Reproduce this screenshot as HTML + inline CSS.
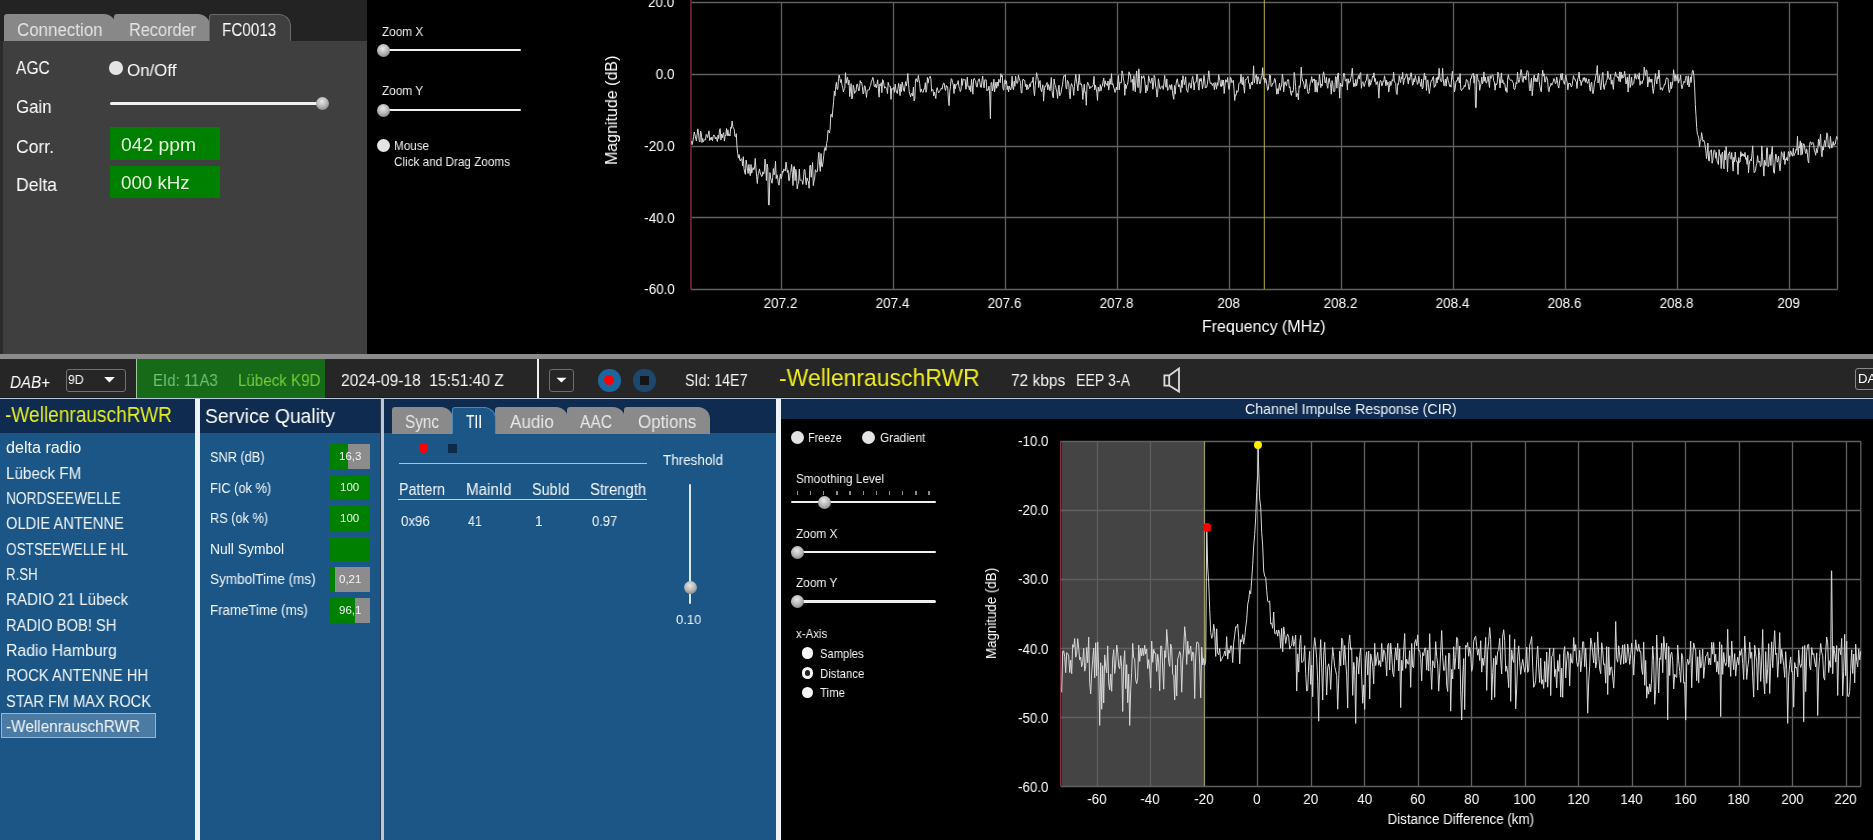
<!DOCTYPE html>
<html><head><meta charset="utf-8"><title>DAB</title>
<style>
html,body{margin:0;padding:0;}
body{width:1873px;height:840px;overflow:hidden;position:relative;background:#000;font-family:"Liberation Sans",sans-serif;}
.r{position:absolute;}
.t{position:absolute;white-space:pre;line-height:normal;will-change:transform;}
</style></head><body>
<div class="r" style="left:0.00px;top:0.00px;width:367.00px;height:354.00px;background:#3f3f3f;"></div>
<div class="r" style="left:0.00px;top:0.00px;width:367.00px;height:41.00px;background:#232323;"></div>
<div class="r" style="left:0.00px;top:41.00px;width:2.50px;height:313.00px;background:#2b2b2b;"></div>
<div class="r" style="left:4px;top:14px;width:112px;height:27px;background:#888888;border-radius:3px 12px 0 0;box-sizing:border-box;"></div>
<div class="r" style="left:114px;top:14px;width:96px;height:27px;background:#888888;border-radius:3px 12px 0 0;box-sizing:border-box;"></div>
<div class="r" style="left:209px;top:14px;width:82px;height:27px;background:#3f3f3f;border-radius:3px 12px 0 0;border:1px solid #6a6a6a;border-bottom:none;box-sizing:border-box;"></div>
<div class="r" style="left:210.00px;top:40.00px;width:80.00px;height:3.00px;background:#3f3f3f;"></div>
<div class="t" style="left:16.70px;top:19.14px;font-size:18.3px;color:#e4e4e4;transform:scaleX(0.9256);transform-origin:left top;">Connection</div>
<div class="t" style="left:128.60px;top:19.14px;font-size:18.3px;color:#e4e4e4;transform:scaleX(0.8915);transform-origin:left top;">Recorder</div>
<div class="t" style="left:221.90px;top:19.14px;font-size:18.3px;color:#ffffff;transform:scaleX(0.8340);transform-origin:left top;">FC0013</div>
<div class="t" style="left:15.70px;top:57.47px;font-size:18.6px;color:#ffffff;transform:scaleX(0.8386);transform-origin:left top;">AGC</div>
<div class="r" style="left:109.30px;top:61.20px;width:13.40px;height:13.40px;border-radius:50%;background:#e4e4e4;"></div>
<div class="t" style="left:126.70px;top:60.04px;font-size:17.3px;color:#ffffff;transform:scaleX(0.9775);transform-origin:left top;">On/Off</div>
<div class="t" style="left:15.70px;top:95.67px;font-size:18.6px;color:#ffffff;transform:scaleX(0.9035);transform-origin:left top;">Gain</div>
<div class="r" style="left:110.00px;top:102.40px;width:208.00px;height:2.40px;background:#f0f0f0;border-radius:1.5px;"></div>
<div class="r" style="left:316.10px;top:97.10px;width:13.00px;height:13.00px;border-radius:50%;background:radial-gradient(circle at 45% 35%, #e8e8e8 0%, #b8b8b8 45%, #707070 100%);"></div>
<div class="t" style="left:15.70px;top:135.57px;font-size:18.6px;color:#ffffff;transform:scaleX(0.9403);transform-origin:left top;">Corr.</div>
<div class="r" style="left:110.00px;top:127.40px;width:109.50px;height:32.60px;background:#008000;"></div>
<div class="t" style="left:121.40px;top:135.41px;font-size:18px;color:#e8f8e0;transform:scaleX(1.0706);transform-origin:left top;">042 ppm</div>
<div class="t" style="left:15.70px;top:173.67px;font-size:18.6px;color:#ffffff;transform:scaleX(0.9442);transform-origin:left top;">Delta</div>
<div class="r" style="left:110.00px;top:165.50px;width:109.50px;height:32.10px;background:#008000;"></div>
<div class="t" style="left:121.40px;top:173.21px;font-size:18px;color:#e8f8e0;transform:scaleX(1.0389);transform-origin:left top;">000 kHz</div>
<div class="r" style="left:367.00px;top:0.00px;width:1506.00px;height:354.00px;background:#000000;"></div>
<div class="t" style="left:381.90px;top:23.62px;font-size:12.8px;color:#f0f0f0;transform:scaleX(0.9194);transform-origin:left top;">Zoom X</div>
<div class="r" style="left:388.00px;top:48.80px;width:133.40px;height:2.40px;background:#f0f0f0;border-radius:1.5px;"></div>
<div class="r" style="left:376.80px;top:43.50px;width:13.00px;height:13.00px;border-radius:50%;background:radial-gradient(circle at 45% 35%, #e8e8e8 0%, #b8b8b8 45%, #707070 100%);"></div>
<div class="t" style="left:381.90px;top:83.22px;font-size:12.8px;color:#f0f0f0;transform:scaleX(0.9241);transform-origin:left top;">Zoom Y</div>
<div class="r" style="left:388.00px;top:108.80px;width:133.40px;height:2.40px;background:#f0f0f0;border-radius:1.5px;"></div>
<div class="r" style="left:376.80px;top:103.50px;width:13.00px;height:13.00px;border-radius:50%;background:radial-gradient(circle at 45% 35%, #e8e8e8 0%, #b8b8b8 45%, #707070 100%);"></div>
<div class="r" style="left:376.60px;top:138.70px;width:13.00px;height:13.00px;border-radius:50%;background:#e4e4e4;"></div>
<div class="t" style="left:394.00px;top:138.42px;font-size:12.8px;color:#f0f0f0;transform:scaleX(0.9110);transform-origin:left top;">Mouse</div>
<div class="t" style="left:394.00px;top:154.42px;font-size:12.8px;color:#f0f0f0;transform:scaleX(0.9161);transform-origin:left top;">Click and Drag Zooms</div>
<svg class="r" style="left:0;top:0" width="1873" height="354"><line x1="691" y1="2.5" x2="1837.5" y2="2.5" stroke="#606060" stroke-width="1.3"/><line x1="691" y1="74.5" x2="1837.5" y2="74.5" stroke="#606060" stroke-width="1.3"/><line x1="691" y1="146.5" x2="1837.5" y2="146.5" stroke="#606060" stroke-width="1.3"/><line x1="691" y1="217.5" x2="1837.5" y2="217.5" stroke="#606060" stroke-width="1.3"/><line x1="691" y1="289.5" x2="1837.5" y2="289.5" stroke="#606060" stroke-width="1.3"/><line x1="781.5" y1="2" x2="781.5" y2="289.3" stroke="#606060" stroke-width="1.3"/><line x1="893.5" y1="2" x2="893.5" y2="289.3" stroke="#606060" stroke-width="1.3"/><line x1="1005.5" y1="2" x2="1005.5" y2="289.3" stroke="#606060" stroke-width="1.3"/><line x1="1117.5" y1="2" x2="1117.5" y2="289.3" stroke="#606060" stroke-width="1.3"/><line x1="1229.5" y1="2" x2="1229.5" y2="289.3" stroke="#606060" stroke-width="1.3"/><line x1="1341.5" y1="2" x2="1341.5" y2="289.3" stroke="#606060" stroke-width="1.3"/><line x1="1453.5" y1="2" x2="1453.5" y2="289.3" stroke="#606060" stroke-width="1.3"/><line x1="1565.5" y1="2" x2="1565.5" y2="289.3" stroke="#606060" stroke-width="1.3"/><line x1="1677.5" y1="2" x2="1677.5" y2="289.3" stroke="#606060" stroke-width="1.3"/><line x1="1789.5" y1="2" x2="1789.5" y2="289.3" stroke="#606060" stroke-width="1.3"/><line x1="1837.5" y1="2" x2="1837.5" y2="289.3" stroke="#606060" stroke-width="1.3"/><line x1="691" y1="0" x2="691" y2="289.3" stroke="#7a2838" stroke-width="1.6"/><line x1="1264.3" y1="0" x2="1264.3" y2="289.3" stroke="#b8b040" stroke-width="1"/><polyline points="691.5,141.2 692.2,144.6 692.9,141.0 693.6,136.7 694.3,132.0 695.0,134.8 695.7,138.6 696.4,140.9 697.1,134.8 697.8,128.8 698.5,132.5 699.2,140.4 699.9,141.9 700.6,131.1 701.3,133.4 702.0,142.6 702.7,138.5 703.4,141.8 704.1,140.5 704.8,139.3 705.5,139.8 706.2,134.4 706.9,135.1 707.6,137.6 708.3,134.0 709.0,130.8 709.7,140.5 710.4,137.7 711.1,139.9 711.8,137.0 712.5,140.8 713.2,136.3 713.9,134.9 714.6,135.5 715.3,138.9 716.0,137.2 716.7,139.5 717.4,141.5 718.1,135.1 718.8,138.7 719.5,129.8 720.2,128.6 720.9,140.1 721.6,134.0 722.3,137.9 723.0,134.2 723.7,132.7 724.4,141.1 725.1,136.2 725.8,134.6 726.5,128.5 727.2,135.8 727.9,129.8 728.6,135.7 729.3,134.3 730.0,136.0 730.7,127.2 731.4,128.4 732.1,121.0 732.8,126.7 733.5,128.2 734.2,129.2 734.9,136.3 735.6,136.8 736.3,133.7 737.0,147.1 737.7,153.6 738.4,158.1 739.1,154.5 739.8,160.1 740.5,160.9 741.2,158.7 741.9,159.1 742.6,166.0 743.3,156.7 744.0,168.6 744.7,172.3 745.4,174.4 746.1,160.1 746.8,164.3 747.5,170.2 748.2,173.6 748.9,164.4 749.6,171.5 750.3,175.7 751.0,164.5 751.7,173.2 752.4,170.5 753.1,167.6 753.8,169.8 754.5,168.2 755.2,158.4 755.9,167.8 756.6,176.3 757.3,183.5 758.0,175.1 758.7,173.4 759.4,168.9 760.1,172.5 760.8,174.1 761.5,176.5 762.2,176.2 762.9,171.7 763.6,174.1 764.3,171.8 765.0,159.1 765.7,164.5 766.4,180.5 767.1,164.0 767.8,167.8 768.5,204.9 769.2,204.9 769.9,172.6 770.6,178.0 771.3,180.1 772.0,183.3 772.7,177.4 773.4,168.5 774.1,174.9 774.8,172.1 775.5,161.3 776.2,178.6 776.9,174.7 777.6,177.2 778.3,183.2 779.0,185.2 779.7,179.0 780.4,173.9 781.1,178.7 781.8,176.5 782.5,171.2 783.2,172.3 783.9,168.9 784.6,170.5 785.3,170.9 786.0,162.1 786.7,167.2 787.4,172.4 788.1,170.3 788.8,180.7 789.5,180.4 790.2,172.7 790.9,171.2 791.6,164.5 792.3,172.6 793.0,185.5 793.7,166.9 794.4,166.3 795.1,180.7 795.8,169.3 796.5,174.5 797.2,188.9 797.9,184.5 798.6,183.6 799.3,169.1 800.0,180.3 800.7,180.2 801.4,180.2 802.1,180.8 802.8,184.4 803.5,177.8 804.2,169.6 804.9,169.6 805.6,179.9 806.3,184.9 807.0,177.9 807.7,180.8 808.4,181.2 809.1,188.3 809.8,166.0 810.5,165.0 811.2,177.3 811.9,168.7 812.6,162.6 813.3,185.6 814.0,181.0 814.7,178.1 815.4,169.7 816.1,171.4 816.8,172.2 817.5,170.9 818.2,158.5 818.9,152.3 819.6,165.3 820.3,171.4 821.0,153.5 821.7,166.4 822.4,166.7 823.1,161.3 823.8,155.3 824.5,148.7 825.2,147.4 825.9,150.5 826.6,143.5 827.3,140.1 828.0,130.3 828.7,130.7 829.4,132.9 830.1,129.2 830.8,114.5 831.5,114.2 832.2,117.2 832.9,108.7 833.6,101.6 834.3,91.2 835.0,95.8 835.7,86.7 836.4,82.3 837.1,89.5 837.8,89.2 838.5,78.4 839.2,75.0 839.9,78.4 840.6,82.5 841.3,79.5 842.0,85.4 842.7,87.2 843.4,92.0 844.1,89.0 844.8,88.4 845.5,72.7 846.2,83.3 846.9,79.0 847.6,77.3 848.3,84.8 849.0,80.1 849.7,96.6 850.4,90.0 851.1,83.6 851.8,99.0 852.5,97.7 853.2,85.2 853.9,87.9 854.6,93.5 855.3,91.5 856.0,91.7 856.7,84.9 857.4,83.9 858.1,87.6 858.8,91.0 859.5,88.8 860.2,80.6 860.9,83.0 861.6,82.2 862.3,86.3 863.0,93.9 863.7,93.4 864.4,85.8 865.1,86.1 865.8,91.7 866.5,97.5 867.2,90.2 867.9,90.0 868.6,90.0 869.3,89.9 870.0,86.5 870.7,85.3 871.4,81.2 872.1,80.0 872.8,77.4 873.5,79.3 874.2,86.2 874.9,87.0 875.6,84.3 876.3,87.8 877.0,84.3 877.7,79.8 878.4,88.8 879.1,97.2 879.8,84.1 880.5,85.9 881.2,82.7 881.9,92.7 882.6,79.6 883.3,80.4 884.0,85.3 884.7,88.3 885.4,86.8 886.1,87.8 886.8,88.7 887.5,93.6 888.2,82.4 888.9,85.5 889.6,86.0 890.3,86.1 891.0,99.4 891.7,88.4 892.4,89.2 893.1,89.2 893.8,87.3 894.5,92.3 895.2,84.1 895.9,89.7 896.6,92.7 897.3,93.5 898.0,88.3 898.7,83.3 899.4,88.8 900.1,95.7 900.8,84.1 901.5,91.6 902.2,82.0 902.9,85.4 903.6,90.0 904.3,91.4 905.0,85.8 905.7,81.6 906.4,86.0 907.1,81.3 907.8,73.5 908.5,83.2 909.2,91.7 909.9,94.1 910.6,96.8 911.3,93.7 912.0,93.0 912.7,96.1 913.4,87.0 914.1,100.9 914.8,98.8 915.5,79.9 916.2,78.6 916.9,81.0 917.6,82.1 918.3,75.4 919.0,79.7 919.7,83.7 920.4,92.2 921.1,88.9 921.8,91.4 922.5,92.0 923.2,92.3 923.9,88.8 924.6,89.1 925.3,82.7 926.0,92.3 926.7,89.4 927.4,77.4 928.1,83.1 928.8,78.8 929.5,77.6 930.2,76.2 930.9,78.8 931.6,91.3 932.3,89.6 933.0,89.6 933.7,95.9 934.4,92.2 935.1,95.2 935.8,98.5 936.5,89.5 937.2,87.7 937.9,90.6 938.6,93.0 939.3,91.6 940.0,90.3 940.7,89.9 941.4,87.9 942.1,89.2 942.8,85.2 943.5,83.1 944.2,83.2 944.9,88.8 945.6,90.5 946.3,85.4 947.0,87.0 947.7,86.7 948.4,99.9 949.1,105.7 949.8,91.2 950.5,86.2 951.2,78.6 951.9,79.6 952.6,82.7 953.3,84.9 954.0,93.5 954.7,83.9 955.4,88.7 956.1,84.3 956.8,84.4 957.5,84.1 958.2,80.6 958.9,86.8 959.6,88.5 960.3,91.6 961.0,90.1 961.7,78.4 962.4,85.4 963.1,79.4 963.8,79.3 964.5,79.7 965.2,79.5 965.9,89.3 966.6,85.1 967.3,77.1 968.0,86.7 968.7,86.5 969.4,89.9 970.1,85.7 970.8,91.7 971.5,79.3 972.2,85.7 972.9,94.2 973.6,79.1 974.3,78.3 975.0,80.5 975.7,81.1 976.4,86.2 977.1,87.2 977.8,82.4 978.5,79.7 979.2,78.7 979.9,82.2 980.6,87.1 981.3,87.4 982.0,80.4 982.7,76.1 983.4,84.3 984.1,87.9 984.8,79.8 985.5,79.8 986.2,79.9 986.9,90.9 987.6,89.6 988.3,89.9 989.0,86.1 989.7,95.0 990.4,118.7 991.1,82.9 991.8,82.4 992.5,91.0 993.2,87.7 993.9,79.2 994.6,92.0 995.3,86.2 996.0,82.1 996.7,88.2 997.4,82.2 998.1,86.2 998.8,79.2 999.5,80.6 1000.2,82.7 1000.9,73.7 1001.6,77.0 1002.3,75.5 1003.0,88.6 1003.7,90.2 1004.4,82.7 1005.1,79.7 1005.8,83.9 1006.5,80.8 1007.2,89.7 1007.9,85.9 1008.6,91.9 1009.3,86.0 1010.0,88.4 1010.7,90.0 1011.4,86.8 1012.1,76.2 1012.8,87.8 1013.5,89.6 1014.2,81.2 1014.9,86.3 1015.6,76.2 1016.3,81.1 1017.0,83.5 1017.7,82.9 1018.4,75.2 1019.1,78.3 1019.8,80.2 1020.5,82.3 1021.2,92.9 1021.9,92.9 1022.6,80.0 1023.3,79.1 1024.0,80.5 1024.7,80.3 1025.4,86.6 1026.1,84.0 1026.8,89.9 1027.5,84.9 1028.2,89.1 1028.9,87.9 1029.6,83.8 1030.3,86.7 1031.0,82.3 1031.7,81.9 1032.4,82.2 1033.1,77.1 1033.8,90.5 1034.5,95.8 1035.2,85.7 1035.9,80.4 1036.6,72.7 1037.3,76.8 1038.0,77.9 1038.7,87.5 1039.4,82.0 1040.1,80.5 1040.8,89.4 1041.5,91.6 1042.2,88.1 1042.9,84.8 1043.6,101.1 1044.3,90.5 1045.0,85.9 1045.7,86.5 1046.4,84.3 1047.1,82.5 1047.8,89.8 1048.5,84.6 1049.2,86.4 1049.9,90.8 1050.6,86.1 1051.3,77.5 1052.0,90.5 1052.7,96.1 1053.4,98.0 1054.1,79.0 1054.8,84.4 1055.5,85.3 1056.2,89.5 1056.9,91.8 1057.6,98.5 1058.3,89.0 1059.0,85.1 1059.7,95.9 1060.4,94.6 1061.1,92.5 1061.8,87.9 1062.5,84.8 1063.2,78.9 1063.9,75.6 1064.6,76.0 1065.3,74.7 1066.0,87.8 1066.7,89.1 1067.4,80.3 1068.1,81.9 1068.8,83.9 1069.5,95.4 1070.2,98.8 1070.9,85.9 1071.6,83.6 1072.3,86.2 1073.0,87.7 1073.7,95.4 1074.4,86.7 1075.1,80.0 1075.8,74.4 1076.5,81.1 1077.2,84.8 1077.9,90.9 1078.6,80.5 1079.3,74.2 1080.0,84.6 1080.7,83.3 1081.4,83.9 1082.1,87.8 1082.8,99.5 1083.5,92.1 1084.2,84.2 1084.9,92.6 1085.6,92.2 1086.3,105.3 1087.0,85.1 1087.7,82.3 1088.4,83.8 1089.1,86.0 1089.8,88.8 1090.5,86.7 1091.2,87.3 1091.9,87.1 1092.6,85.9 1093.3,84.6 1094.0,76.4 1094.7,89.8 1095.4,85.2 1096.1,88.4 1096.8,92.3 1097.5,100.4 1098.2,87.0 1098.9,91.0 1099.6,91.2 1100.3,84.6 1101.0,90.7 1101.7,86.8 1102.4,86.0 1103.1,81.0 1103.8,78.1 1104.5,87.2 1105.2,80.8 1105.9,84.0 1106.6,83.9 1107.3,85.7 1108.0,81.0 1108.7,90.1 1109.4,85.3 1110.1,78.7 1110.8,84.3 1111.5,73.7 1112.2,84.9 1112.9,83.7 1113.6,87.1 1114.3,89.0 1115.0,92.4 1115.7,90.4 1116.4,87.1 1117.1,90.0 1117.8,81.9 1118.5,75.5 1119.2,89.9 1119.9,82.1 1120.6,82.8 1121.3,82.8 1122.0,70.8 1122.7,73.3 1123.4,79.0 1124.1,81.8 1124.8,95.4 1125.5,84.3 1126.2,88.6 1126.9,85.1 1127.6,84.3 1128.3,79.3 1129.0,71.8 1129.7,74.8 1130.4,74.3 1131.1,82.3 1131.8,81.4 1132.5,79.3 1133.2,90.6 1133.9,75.6 1134.6,85.4 1135.3,91.8 1136.0,78.3 1136.7,70.9 1137.4,83.6 1138.1,87.6 1138.8,68.8 1139.5,78.4 1140.2,93.2 1140.9,90.9 1141.6,75.9 1142.3,78.0 1143.0,78.2 1143.7,75.7 1144.4,77.8 1145.1,84.0 1145.8,93.0 1146.5,85.1 1147.2,90.8 1147.9,87.0 1148.6,75.8 1149.3,78.5 1150.0,82.1 1150.7,83.3 1151.4,80.1 1152.1,78.0 1152.8,89.3 1153.5,85.2 1154.2,75.4 1154.9,77.2 1155.6,86.1 1156.3,88.7 1157.0,97.1 1157.7,93.2 1158.4,78.8 1159.1,82.8 1159.8,88.5 1160.5,89.0 1161.2,86.6 1161.9,85.8 1162.6,86.8 1163.3,89.4 1164.0,82.7 1164.7,75.4 1165.4,84.3 1166.1,87.3 1166.8,78.9 1167.5,90.4 1168.2,89.7 1168.9,88.3 1169.6,84.8 1170.3,86.0 1171.0,89.7 1171.7,84.5 1172.4,90.8 1173.1,96.1 1173.8,99.4 1174.5,85.5 1175.2,94.2 1175.9,85.3 1176.6,81.0 1177.3,78.8 1178.0,83.3 1178.7,86.9 1179.4,84.7 1180.1,87.7 1180.8,92.4 1181.5,80.3 1182.2,87.7 1182.9,75.7 1183.6,78.5 1184.3,84.7 1185.0,82.0 1185.7,76.8 1186.4,89.1 1187.1,90.9 1187.8,92.3 1188.5,86.1 1189.2,82.7 1189.9,83.5 1190.6,87.9 1191.3,88.3 1192.0,79.2 1192.7,76.4 1193.4,80.7 1194.1,90.1 1194.8,82.8 1195.5,82.1 1196.2,82.1 1196.9,74.0 1197.6,76.1 1198.3,86.6 1199.0,90.2 1199.7,78.8 1200.4,81.1 1201.1,78.2 1201.8,82.6 1202.5,88.7 1203.2,84.0 1203.9,75.3 1204.6,78.8 1205.3,88.0 1206.0,86.8 1206.7,87.3 1207.4,83.9 1208.1,78.0 1208.8,70.8 1209.5,77.7 1210.2,83.6 1210.9,83.0 1211.6,83.0 1212.3,85.5 1213.0,83.9 1213.7,83.4 1214.4,89.7 1215.1,82.5 1215.8,84.9 1216.5,89.1 1217.2,82.6 1217.9,85.6 1218.6,74.6 1219.3,77.6 1220.0,80.8 1220.7,86.5 1221.4,86.6 1222.1,79.8 1222.8,85.7 1223.5,80.0 1224.2,93.5 1224.9,85.7 1225.6,79.7 1226.3,80.2 1227.0,82.2 1227.7,77.4 1228.4,85.8 1229.1,89.5 1229.8,84.9 1230.5,77.3 1231.2,78.8 1231.9,82.7 1232.6,81.4 1233.3,80.2 1234.0,88.9 1234.7,100.5 1235.4,94.8 1236.1,95.4 1236.8,90.6 1237.5,92.3 1238.2,91.1 1238.9,83.6 1239.6,82.8 1240.3,83.2 1241.0,74.1 1241.7,82.5 1242.4,84.9 1243.1,76.8 1243.8,86.9 1244.5,93.2 1245.2,79.5 1245.9,79.9 1246.6,78.6 1247.3,78.0 1248.0,76.3 1248.7,83.2 1249.4,83.4 1250.1,89.1 1250.8,84.3 1251.5,82.1 1252.2,85.0 1252.9,79.9 1253.6,65.8 1254.3,83.1 1255.0,78.3 1255.7,76.1 1256.4,74.6 1257.1,84.2 1257.8,76.7 1258.5,77.0 1259.2,81.3 1259.9,84.0 1260.6,81.7 1261.3,77.1 1262.0,75.8 1262.7,67.7 1263.4,79.2 1264.1,77.9 1264.8,83.1 1265.5,78.3 1266.2,80.2 1266.9,84.8 1267.6,90.4 1268.3,89.3 1269.0,83.4 1269.7,74.7 1270.4,75.4 1271.1,86.4 1271.8,86.3 1272.5,83.5 1273.2,83.5 1273.9,82.5 1274.6,78.3 1275.3,80.0 1276.0,85.5 1276.7,94.2 1277.4,88.7 1278.1,94.1 1278.8,87.8 1279.5,83.0 1280.2,90.4 1280.9,86.5 1281.6,86.3 1282.3,74.1 1283.0,77.8 1283.7,91.8 1284.4,84.1 1285.1,81.6 1285.8,84.1 1286.5,85.9 1287.2,81.3 1287.9,79.3 1288.6,79.9 1289.3,87.9 1290.0,86.7 1290.7,93.4 1291.4,95.4 1292.1,91.0 1292.8,92.2 1293.5,89.2 1294.2,72.4 1294.9,77.4 1295.6,86.6 1296.3,96.8 1297.0,93.2 1297.7,95.2 1298.4,100.0 1299.1,85.9 1299.8,87.5 1300.5,83.1 1301.2,67.1 1301.9,76.9 1302.6,81.1 1303.3,81.3 1304.0,84.7 1304.7,89.0 1305.4,87.1 1306.1,79.1 1306.8,83.9 1307.5,91.6 1308.2,93.6 1308.9,93.1 1309.6,87.3 1310.3,82.7 1311.0,81.0 1311.7,76.6 1312.4,82.6 1313.1,79.0 1313.8,80.5 1314.5,78.9 1315.2,92.1 1315.9,79.9 1316.6,90.8 1317.3,92.3 1318.0,82.4 1318.7,85.3 1319.4,74.5 1320.1,79.5 1320.8,87.6 1321.5,84.0 1322.2,85.8 1322.9,75.8 1323.6,71.8 1324.3,75.3 1325.0,82.7 1325.7,82.6 1326.4,77.3 1327.1,85.5 1327.8,88.3 1328.5,80.4 1329.2,78.2 1329.9,82.7 1330.6,84.5 1331.3,94.2 1332.0,80.6 1332.7,82.9 1333.4,90.8 1334.1,91.9 1334.8,91.0 1335.5,76.6 1336.2,77.1 1336.9,88.2 1337.6,74.8 1338.3,72.9 1339.0,85.2 1339.7,98.2 1340.4,83.1 1341.1,86.3 1341.8,84.9 1342.5,86.5 1343.2,77.4 1343.9,73.0 1344.6,75.1 1345.3,81.0 1346.0,80.9 1346.7,78.9 1347.4,90.1 1348.1,78.7 1348.8,83.2 1349.5,81.6 1350.2,81.7 1350.9,77.6 1351.6,75.2 1352.3,68.2 1353.0,79.7 1353.7,86.6 1354.4,83.4 1355.1,86.6 1355.8,79.4 1356.5,86.0 1357.2,83.1 1357.9,77.8 1358.6,75.5 1359.3,79.1 1360.0,73.7 1360.7,72.6 1361.4,88.3 1362.1,82.7 1362.8,81.7 1363.5,83.9 1364.2,86.5 1364.9,83.7 1365.6,80.9 1366.3,80.5 1367.0,74.4 1367.7,74.3 1368.4,82.8 1369.1,86.7 1369.8,79.4 1370.5,85.2 1371.2,82.5 1371.9,79.9 1372.6,76.0 1373.3,77.4 1374.0,72.8 1374.7,81.6 1375.4,78.5 1376.1,84.6 1376.8,82.2 1377.5,81.6 1378.2,87.2 1378.9,98.2 1379.6,82.7 1380.3,80.5 1381.0,80.9 1381.7,85.7 1382.4,85.3 1383.1,80.9 1383.8,81.7 1384.5,75.8 1385.2,79.4 1385.9,85.8 1386.6,80.2 1387.3,85.0 1388.0,82.1 1388.7,92.1 1389.4,87.6 1390.1,81.2 1390.8,85.5 1391.5,83.6 1392.2,79.6 1392.9,81.0 1393.6,72.2 1394.3,80.2 1395.0,82.6 1395.7,83.3 1396.4,93.4 1397.1,94.5 1397.8,83.7 1398.5,84.6 1399.2,75.6 1399.9,80.4 1400.6,82.6 1401.3,76.8 1402.0,78.9 1402.7,72.4 1403.4,84.6 1404.1,80.7 1404.8,78.0 1405.5,77.8 1406.2,74.4 1406.9,73.9 1407.6,79.1 1408.3,84.1 1409.0,77.5 1409.7,80.2 1410.4,76.2 1411.1,72.7 1411.8,77.6 1412.5,85.3 1413.2,84.5 1413.9,78.5 1414.6,81.9 1415.3,75.5 1416.0,79.3 1416.7,80.2 1417.4,84.5 1418.1,83.2 1418.8,76.2 1419.5,81.6 1420.2,83.4 1420.9,86.5 1421.6,79.1 1422.3,89.0 1423.0,87.8 1423.7,78.9 1424.4,73.0 1425.1,79.9 1425.8,75.9 1426.5,90.5 1427.2,80.7 1427.9,79.8 1428.6,87.7 1429.3,93.5 1430.0,88.6 1430.7,82.8 1431.4,80.2 1432.1,80.6 1432.8,77.2 1433.5,76.4 1434.2,87.4 1434.9,85.8 1435.6,86.0 1436.3,77.7 1437.0,83.0 1437.7,76.8 1438.4,79.5 1439.1,68.3 1439.8,77.3 1440.5,80.2 1441.2,81.8 1441.9,81.0 1442.6,68.3 1443.3,79.8 1444.0,85.8 1444.7,84.2 1445.4,79.0 1446.1,86.2 1446.8,79.0 1447.5,76.7 1448.2,80.9 1448.9,82.8 1449.6,86.4 1450.3,84.9 1451.0,87.2 1451.7,76.9 1452.4,71.3 1453.1,79.6 1453.8,81.3 1454.5,91.9 1455.2,88.2 1455.9,82.2 1456.6,80.5 1457.3,80.7 1458.0,76.8 1458.7,79.6 1459.4,83.1 1460.1,73.6 1460.8,89.3 1461.5,90.7 1462.2,88.9 1462.9,88.3 1463.6,88.3 1464.3,85.3 1465.0,86.9 1465.7,83.9 1466.4,79.4 1467.1,80.8 1467.8,80.8 1468.5,86.6 1469.2,89.7 1469.9,86.2 1470.6,78.4 1471.3,78.6 1472.0,74.9 1472.7,74.1 1473.4,73.1 1474.1,83.2 1474.8,75.6 1475.5,107.6 1476.2,107.6 1476.9,74.0 1477.6,77.3 1478.3,81.0 1479.0,80.6 1479.7,90.3 1480.4,86.2 1481.1,83.5 1481.8,77.1 1482.5,83.7 1483.2,81.7 1483.9,71.9 1484.6,81.2 1485.3,77.0 1486.0,83.0 1486.7,82.7 1487.4,79.6 1488.1,76.3 1488.8,82.5 1489.5,87.5 1490.2,75.6 1490.9,78.6 1491.6,76.4 1492.3,74.9 1493.0,75.3 1493.7,80.9 1494.4,82.1 1495.1,90.2 1495.8,83.7 1496.5,84.9 1497.2,82.9 1497.9,72.1 1498.6,74.6 1499.3,78.9 1500.0,88.0 1500.7,80.0 1501.4,72.9 1502.1,83.0 1502.8,79.8 1503.5,83.8 1504.2,83.2 1504.9,84.1 1505.6,91.1 1506.3,87.7 1507.0,92.4 1507.7,78.0 1508.4,74.8 1509.1,79.0 1509.8,79.2 1510.5,80.4 1511.2,80.1 1511.9,80.0 1512.6,82.3 1513.3,82.7 1514.0,89.1 1514.7,89.6 1515.4,87.6 1516.1,82.5 1516.8,83.9 1517.5,72.2 1518.2,79.3 1518.9,82.6 1519.6,79.6 1520.3,75.3 1521.0,69.5 1521.7,72.1 1522.4,81.3 1523.1,82.3 1523.8,76.2 1524.5,78.2 1525.2,76.1 1525.9,79.9 1526.6,72.4 1527.3,70.5 1528.0,71.6 1528.7,77.1 1529.4,88.4 1530.1,91.0 1530.8,83.0 1531.5,78.4 1532.2,95.8 1532.9,88.9 1533.6,77.8 1534.3,75.0 1535.0,81.7 1535.7,78.0 1536.4,80.0 1537.1,82.0 1537.8,75.5 1538.5,73.2 1539.2,81.2 1539.9,86.2 1540.6,89.9 1541.3,91.8 1542.0,77.8 1542.7,70.1 1543.4,76.1 1544.1,73.8 1544.8,82.2 1545.5,81.9 1546.2,76.5 1546.9,77.8 1547.6,80.1 1548.3,89.6 1549.0,91.7 1549.7,87.0 1550.4,86.1 1551.1,83.2 1551.8,85.2 1552.5,83.6 1553.2,81.6 1553.9,78.5 1554.6,79.8 1555.3,83.5 1556.0,83.4 1556.7,77.0 1557.4,80.7 1558.1,86.0 1558.8,88.1 1559.5,82.0 1560.2,78.4 1560.9,73.6 1561.6,80.1 1562.3,73.4 1563.0,80.2 1563.7,81.9 1564.4,84.3 1565.1,79.4 1565.8,74.9 1566.5,79.0 1567.2,82.9 1567.9,89.8 1568.6,83.3 1569.3,83.6 1570.0,83.0 1570.7,85.0 1571.4,87.0 1572.1,85.4 1572.8,80.2 1573.5,75.7 1574.2,79.2 1574.9,78.7 1575.6,81.2 1576.3,81.7 1577.0,88.5 1577.7,79.0 1578.4,77.1 1579.1,72.0 1579.8,81.0 1580.5,80.3 1581.2,85.6 1581.9,81.3 1582.6,81.7 1583.3,77.7 1584.0,80.6 1584.7,77.4 1585.4,82.3 1586.1,78.3 1586.8,81.6 1587.5,83.4 1588.2,81.3 1588.9,79.1 1589.6,87.7 1590.3,91.2 1591.0,83.5 1591.7,82.1 1592.4,92.0 1593.1,93.7 1593.8,89.4 1594.5,82.1 1595.2,80.2 1595.9,75.3 1596.6,72.7 1597.3,65.5 1598.0,83.0 1598.7,81.8 1599.4,75.5 1600.1,85.5 1600.8,89.9 1601.5,82.9 1602.2,75.7 1602.9,72.4 1603.6,87.2 1604.3,89.4 1605.0,84.3 1605.7,84.7 1606.4,80.4 1607.1,79.9 1607.8,71.2 1608.5,77.7 1609.2,78.7 1609.9,79.6 1610.6,74.5 1611.3,84.3 1612.0,79.9 1612.7,84.5 1613.4,89.4 1614.1,77.5 1614.8,76.7 1615.5,71.9 1616.2,76.2 1616.9,75.6 1617.6,78.1 1618.3,76.7 1619.0,81.3 1619.7,71.8 1620.4,82.1 1621.1,72.0 1621.8,78.5 1622.5,75.2 1623.2,77.9 1623.9,77.2 1624.6,71.4 1625.3,76.5 1626.0,84.0 1626.7,80.4 1627.4,76.9 1628.1,92.1 1628.8,79.3 1629.5,74.2 1630.2,87.5 1630.9,83.7 1631.6,77.1 1632.3,85.3 1633.0,84.3 1633.7,83.5 1634.4,78.4 1635.1,73.7 1635.8,78.1 1636.5,79.2 1637.2,74.9 1637.9,75.5 1638.6,79.2 1639.3,72.8 1640.0,85.2 1640.7,81.1 1641.4,82.8 1642.1,83.8 1642.8,80.4 1643.5,80.1 1644.2,67.1 1644.9,72.2 1645.6,75.5 1646.3,69.8 1647.0,71.1 1647.7,87.0 1648.4,81.9 1649.1,76.8 1649.8,82.2 1650.5,79.3 1651.2,82.3 1651.9,78.9 1652.6,88.5 1653.3,93.5 1654.0,87.8 1654.7,81.7 1655.4,73.6 1656.1,79.4 1656.8,83.9 1657.5,76.6 1658.2,78.8 1658.9,70.1 1659.6,77.1 1660.3,89.6 1661.0,87.8 1661.7,88.0 1662.4,90.4 1663.1,87.9 1663.8,86.6 1664.5,84.0 1665.2,84.5 1665.9,79.5 1666.6,77.8 1667.3,78.4 1668.0,78.5 1668.7,89.7 1669.4,92.5 1670.1,89.2 1670.8,82.0 1671.5,88.7 1672.2,85.4 1672.9,80.7 1673.6,69.7 1674.3,75.1 1675.0,81.3 1675.7,74.7 1676.4,77.2 1677.1,80.8 1677.8,74.4 1678.5,83.1 1679.2,80.2 1679.9,79.8 1680.6,75.2 1681.3,84.7 1682.0,88.8 1682.7,85.3 1683.4,83.5 1684.1,81.2 1684.8,82.6 1685.5,78.8 1686.2,76.1 1686.9,77.6 1687.6,85.0 1688.3,75.8 1689.0,87.0 1689.7,83.8 1690.4,76.9 1691.1,82.5 1691.8,75.1 1692.5,70.3 1693.2,70.6 1693.9,75.9 1694.6,86.3 1695.3,104.5 1696.0,115.6 1696.7,127.5 1697.4,134.5 1698.1,135.7 1698.8,138.2 1699.5,146.8 1700.2,141.2 1700.9,140.1 1701.6,132.6 1702.3,136.5 1703.0,141.6 1703.7,140.1 1704.4,141.4 1705.1,145.9 1705.8,150.2 1706.5,158.7 1707.2,153.4 1707.9,143.1 1708.6,160.5 1709.3,161.1 1710.0,151.1 1710.7,151.1 1711.4,149.8 1712.1,163.3 1712.8,160.4 1713.5,152.9 1714.2,149.8 1714.9,150.7 1715.6,158.2 1716.3,152.3 1717.0,160.9 1717.7,162.5 1718.4,164.5 1719.1,149.5 1719.8,155.6 1720.5,155.0 1721.2,168.6 1721.9,153.4 1722.6,152.1 1723.3,164.6 1724.0,168.8 1724.7,150.5 1725.4,160.0 1726.1,146.5 1726.8,156.0 1727.5,171.6 1728.2,155.4 1728.9,153.5 1729.6,151.8 1730.3,158.6 1731.0,159.3 1731.7,152.5 1732.4,161.0 1733.1,171.1 1733.8,157.2 1734.5,161.8 1735.2,152.0 1735.9,159.3 1736.6,161.7 1737.3,161.5 1738.0,174.4 1738.7,157.5 1739.4,162.7 1740.1,162.0 1740.8,151.7 1741.5,156.4 1742.2,153.5 1742.9,155.9 1743.6,154.2 1744.3,156.8 1745.0,152.4 1745.7,159.3 1746.4,157.7 1747.1,164.4 1747.8,155.3 1748.5,172.8 1749.2,164.5 1749.9,160.7 1750.6,159.4 1751.3,161.0 1752.0,153.4 1752.7,145.9 1753.4,159.9 1754.1,172.7 1754.8,172.2 1755.5,170.3 1756.2,165.5 1756.9,163.3 1757.6,155.6 1758.3,162.1 1759.0,161.9 1759.7,161.0 1760.4,166.7 1761.1,165.2 1761.8,145.9 1762.5,156.5 1763.2,165.5 1763.9,176.1 1764.6,160.1 1765.3,162.8 1766.0,165.7 1766.7,147.8 1767.4,147.8 1768.1,166.9 1768.8,165.3 1769.5,156.5 1770.2,154.4 1770.9,165.5 1771.6,151.7 1772.3,146.4 1773.0,162.6 1773.7,172.3 1774.4,173.4 1775.1,161.1 1775.8,154.0 1776.5,156.7 1777.2,162.2 1777.9,160.8 1778.6,156.0 1779.3,165.0 1780.0,170.8 1780.7,162.8 1781.4,151.7 1782.1,154.0 1782.8,154.5 1783.5,159.7 1784.2,151.6 1784.9,164.5 1785.6,158.8 1786.3,159.8 1787.0,157.2 1787.7,160.8 1788.4,151.6 1789.1,153.2 1789.8,156.7 1790.5,150.9 1791.2,152.1 1791.9,155.1 1792.6,156.3 1793.3,148.2 1794.0,155.6 1794.7,153.6 1795.4,152.9 1796.1,148.9 1796.8,150.3 1797.5,136.2 1798.2,154.9 1798.9,146.9 1799.6,147.7 1800.3,140.9 1801.0,155.2 1801.7,142.8 1802.4,154.3 1803.1,145.7 1803.8,143.7 1804.5,145.9 1805.2,151.3 1805.9,153.6 1806.6,148.8 1807.3,152.3 1808.0,160.8 1808.7,162.8 1809.4,147.6 1810.1,142.0 1810.8,141.9 1811.5,144.7 1812.2,143.6 1812.9,142.4 1813.6,143.5 1814.3,150.2 1815.0,152.1 1815.7,155.3 1816.4,148.4 1817.1,152.9 1817.8,149.4 1818.5,139.1 1819.2,145.7 1819.9,139.8 1820.6,134.1 1821.3,152.7 1822.0,156.8 1822.7,146.5 1823.4,150.1 1824.1,143.7 1824.8,140.3 1825.5,146.6 1826.2,140.5 1826.9,132.8 1827.6,134.8 1828.3,146.6 1829.0,146.3 1829.7,148.5 1830.4,136.4 1831.1,142.8 1831.8,148.1 1832.5,145.3 1833.2,141.5 1833.9,145.5 1834.6,143.9 1835.3,144.0 1836.0,139.4 1836.7,136.4 1837.4,139.5" fill="none" stroke="#d8d8d8" stroke-width="1" stroke-linejoin="round"/></svg>
<div class="t" style="left:647.25px;top:-5.87px;font-size:14px;color:#ffffff;transform:scaleX(0.9643);transform-origin:right top;">20.0</div>
<div class="t" style="left:655.04px;top:65.95px;font-size:14px;color:#ffffff;transform:scaleX(0.9643);transform-origin:right top;">0.0</div>
<div class="t" style="left:642.59px;top:137.78px;font-size:14px;color:#ffffff;transform:scaleX(0.9643);transform-origin:right top;">-20.0</div>
<div class="t" style="left:642.59px;top:209.61px;font-size:14px;color:#ffffff;transform:scaleX(0.9643);transform-origin:right top;">-40.0</div>
<div class="t" style="left:642.59px;top:281.43px;font-size:14px;color:#ffffff;transform:scaleX(0.9643);transform-origin:right top;">-60.0</div>
<div class="t" style="left:763.08px;top:295.33px;font-size:14px;color:#ffffff;transform:scaleX(0.9643);transform-origin:center top;">207.2</div>
<div class="t" style="left:875.08px;top:295.33px;font-size:14px;color:#ffffff;transform:scaleX(0.9643);transform-origin:center top;">207.4</div>
<div class="t" style="left:987.08px;top:295.33px;font-size:14px;color:#ffffff;transform:scaleX(0.9643);transform-origin:center top;">207.6</div>
<div class="t" style="left:1099.08px;top:295.33px;font-size:14px;color:#ffffff;transform:scaleX(0.9643);transform-origin:center top;">207.8</div>
<div class="t" style="left:1216.92px;top:295.33px;font-size:14px;color:#ffffff;transform:scaleX(0.9643);transform-origin:center top;">208</div>
<div class="t" style="left:1323.08px;top:295.33px;font-size:14px;color:#ffffff;transform:scaleX(0.9643);transform-origin:center top;">208.2</div>
<div class="t" style="left:1435.08px;top:295.33px;font-size:14px;color:#ffffff;transform:scaleX(0.9643);transform-origin:center top;">208.4</div>
<div class="t" style="left:1547.08px;top:295.33px;font-size:14px;color:#ffffff;transform:scaleX(0.9643);transform-origin:center top;">208.6</div>
<div class="t" style="left:1659.08px;top:295.33px;font-size:14px;color:#ffffff;transform:scaleX(0.9643);transform-origin:center top;">208.8</div>
<div class="t" style="left:1776.92px;top:295.33px;font-size:14px;color:#ffffff;transform:scaleX(0.9643);transform-origin:center top;">209</div>
<div class="t" style="left:1200.28px;top:316.67px;font-size:16.5px;color:#ffffff;transform:scaleX(0.9697);transform-origin:center top;">Frequency (MHz)</div>
<div class="t" style="left:602.48px;top:165px;font-size:16.6px;color:#fff;transform:rotate(-90deg) scaleX(0.9639);transform-origin:left top;">Magnitude (dB)</div>
<div class="r" style="left:0.00px;top:354.00px;width:1873.00px;height:5.00px;background:#8c8c8c;"></div>
<div class="r" style="left:0.00px;top:359.00px;width:1873.00px;height:38.90px;background:#262626;"></div>
<div class="r" style="left:0.00px;top:396.60px;width:1873.00px;height:1.30px;background:#1a1c1f;"></div>
<div class="r" style="left:0.00px;top:397.90px;width:1873.00px;height:1.30px;background:#b8c8d8;"></div>
<div class="t" style="left:10.00px;top:372.04px;font-size:17.3px;color:#ffffff;transform:scaleX(0.8757);transform-origin:left top;font-style:italic;">DAB+</div>
<div class="r" style="left:66px;top:369.3px;width:60px;height:22.3px;border:1.3px solid #727272;border-radius:3px;box-sizing:border-box;"></div>
<div class="t" style="left:68.40px;top:372.17px;font-size:13.4px;color:#ffffff;transform:scaleX(0.9107);transform-origin:left top;">9D</div>
<svg class="r" style="left:0;top:359px" width="130" height="40"><polygon points="104.1,18 114.8,18 109.45,23.6" fill="#fff"/></svg>
<div class="r" style="left:136.00px;top:359.00px;width:189.00px;height:38.90px;background:#176a17;"></div>
<div class="r" style="left:135.80px;top:359.00px;width:1.50px;height:38.90px;background:#9cc89c;"></div>
<div class="t" style="left:152.50px;top:371.15px;font-size:16.3px;color:#72c07a;transform:scaleX(0.9207);transform-origin:left top;">EId: 11A3</div>
<div class="t" style="left:238.30px;top:371.15px;font-size:16.3px;color:#76cc3c;transform:scaleX(0.9290);transform-origin:left top;">Lübeck K9D</div>
<div class="t" style="left:340.80px;top:370.78px;font-size:16.6px;color:#f4f4f4;transform:scaleX(0.9388);transform-origin:left top;white-space:pre;">2024-09-18  15:51:40 Z</div>
<div class="r" style="left:536.50px;top:359.00px;width:2.80px;height:38.90px;background:#f0f0f0;"></div>
<div class="r" style="left:549px;top:369px;width:25px;height:22.7px;border:1.3px solid #6e6e6e;border-radius:3px;box-sizing:border-box;"></div>
<svg class="r" style="left:540px;top:359px" width="40" height="40"><polygon points="16.5,18.8 26.5,18.8 21.5,23.5" fill="#fff"/></svg>
<div class="r" style="left:598.00px;top:369.10px;width:22.60px;height:22.60px;border-radius:50%;background:#1d67a0;"></div>
<div class="r" style="left:604.30px;top:375.40px;width:10.00px;height:10.00px;border-radius:50%;background:#ff0000;"></div>
<div class="r" style="left:633.00px;top:369.10px;width:22.60px;height:22.60px;border-radius:50%;background:#1c486e;"></div>
<div class="r" style="left:640.20px;top:375.60px;width:8.60px;height:9.80px;background:#151515;"></div>
<div class="t" style="left:685.00px;top:371.38px;font-size:16.6px;color:#f4f4f4;transform:scaleX(0.8572);transform-origin:left top;">SId: 14E7</div>
<div class="t" style="left:779.20px;top:363.60px;font-size:24.2px;color:#f0ee1e;transform:scaleX(0.9490);transform-origin:left top;">-WellenrauschRWR</div>
<div class="t" style="left:1010.70px;top:371.36px;font-size:16.4px;color:#f4f4f4;transform:scaleX(0.9453);transform-origin:left top;">72 kbps</div>
<div class="t" style="left:1076.30px;top:371.36px;font-size:16.4px;color:#f4f4f4;transform:scaleX(0.8626);transform-origin:left top;">EEP 3-A</div>
<svg class="r" style="left:1160px;top:364px" width="25" height="32"><path d="M4.4 11.4 H9.2 V21.6 H4.4 Z M9.2 11.4 L19 4.5 V27.6 L9.2 21.6" fill="none" stroke="#dcdcdc" stroke-width="1.8" stroke-linejoin="miter"/></svg>
<div class="r" style="left:1855.4px;top:368.4px;width:30px;height:21.4px;border:1.3px solid #8a8a8a;border-radius:3px;box-sizing:border-box;"></div>
<div class="t" style="left:1858.00px;top:371.05px;font-size:13.2px;color:#ffffff;">DA</div>
<div class="r" style="left:0.00px;top:399.20px;width:195.00px;height:440.80px;background:#1b5686;"></div>
<div class="r" style="left:0.00px;top:399.20px;width:195.00px;height:33.60px;background:#0f2c50;"></div>
<div class="r" style="left:194.80px;top:399.20px;width:4.80px;height:440.80px;background:#eef3f8;"></div>
<div class="r" style="left:199.60px;top:399.20px;width:181.10px;height:440.80px;background:#1b5686;"></div>
<div class="r" style="left:199.60px;top:399.20px;width:181.10px;height:33.60px;background:#0f2c50;"></div>
<div class="r" style="left:380.40px;top:399.20px;width:0.60px;height:440.80px;background:#2a3a4a;"></div>
<div class="r" style="left:381.00px;top:399.20px;width:3.10px;height:440.80px;background:#b8c8d8;"></div>
<div class="r" style="left:384.10px;top:399.20px;width:391.90px;height:440.80px;background:#1b5686;"></div>
<div class="r" style="left:384.10px;top:399.20px;width:391.90px;height:34.30px;background:#0f2c50;"></div>
<div class="r" style="left:776.00px;top:399.20px;width:5.00px;height:440.80px;background:#eef3f8;"></div>
<div class="r" style="left:781.00px;top:399.20px;width:1092.00px;height:20.00px;background:#0f2c50;"></div>
<div class="r" style="left:781.00px;top:419.20px;width:1092.00px;height:420.80px;background:#000000;"></div>
<div class="t" style="left:5.40px;top:403.22px;font-size:21.3px;color:#e6ee20;transform:scaleX(0.8967);transform-origin:left top;">-WellenrauschRWR</div>
<div class="r" style="left:1px;top:712.7px;width:155px;height:24.9px;background:rgba(200,220,240,0.28);border:1.3px solid #9ab4cc;box-sizing:border-box;"></div>
<div class="t" style="left:5.90px;top:439.32px;font-size:16px;color:#f4f8fc;transform:scaleX(1.0077);transform-origin:left top;">delta radio</div>
<div class="t" style="left:5.90px;top:464.65px;font-size:16px;color:#f4f8fc;transform:scaleX(0.9514);transform-origin:left top;">Lübeck FM</div>
<div class="t" style="left:5.90px;top:489.98px;font-size:16px;color:#f4f8fc;transform:scaleX(0.8593);transform-origin:left top;">NORDSEEWELLE</div>
<div class="t" style="left:5.90px;top:515.31px;font-size:16px;color:#f4f8fc;transform:scaleX(0.9208);transform-origin:left top;">OLDIE ANTENNE</div>
<div class="t" style="left:5.90px;top:540.64px;font-size:16px;color:#f4f8fc;transform:scaleX(0.8462);transform-origin:left top;">OSTSEEWELLE HL</div>
<div class="t" style="left:5.90px;top:565.97px;font-size:16px;color:#f4f8fc;transform:scaleX(0.8266);transform-origin:left top;">R.SH</div>
<div class="t" style="left:5.90px;top:591.30px;font-size:16px;color:#f4f8fc;transform:scaleX(0.9468);transform-origin:left top;">RADIO 21 Lübeck</div>
<div class="t" style="left:5.90px;top:616.63px;font-size:16px;color:#f4f8fc;transform:scaleX(0.9198);transform-origin:left top;">RADIO BOB! SH</div>
<div class="t" style="left:5.90px;top:641.96px;font-size:16px;color:#f4f8fc;transform:scaleX(0.9879);transform-origin:left top;">Radio Hamburg</div>
<div class="t" style="left:5.90px;top:667.29px;font-size:16px;color:#f4f8fc;transform:scaleX(0.9239);transform-origin:left top;">ROCK ANTENNE HH</div>
<div class="t" style="left:5.90px;top:692.62px;font-size:16px;color:#f4f8fc;transform:scaleX(0.9130);transform-origin:left top;">STAR FM MAX ROCK</div>
<div class="t" style="left:5.90px;top:717.95px;font-size:16px;color:#f4f8fc;transform:scaleX(0.9586);transform-origin:left top;">-WellenrauschRWR</div>
<div class="t" style="left:204.90px;top:403.96px;font-size:20.6px;color:#ffffff;transform:scaleX(0.9384);transform-origin:left top;">Service Quality</div>
<div class="t" style="left:209.80px;top:449.61px;font-size:13.8px;color:#f4f8fc;transform:scaleX(0.9230);transform-origin:left top;">SNR (dB)</div>
<div class="r" style="left:330.00px;top:444.00px;width:40.00px;height:24.50px;background:#8c8c8c;"></div>
<div class="r" style="left:330.00px;top:444.00px;width:18.00px;height:24.50px;background:#008000;"></div>
<div class="t" style="left:338.81px;top:450.39px;font-size:11.5px;color:#f4f4f4;">16,3</div>
<div class="t" style="left:209.80px;top:480.61px;font-size:13.8px;color:#f4f8fc;transform:scaleX(0.9282);transform-origin:left top;">FIC (ok %)</div>
<div class="r" style="left:330.00px;top:475.00px;width:40.00px;height:24.50px;background:#8c8c8c;"></div>
<div class="r" style="left:330.00px;top:475.00px;width:40.00px;height:24.50px;background:#008000;"></div>
<div class="t" style="left:340.41px;top:481.39px;font-size:11.5px;color:#f4f4f4;">100</div>
<div class="t" style="left:209.80px;top:510.81px;font-size:13.8px;color:#f4f8fc;transform:scaleX(0.9240);transform-origin:left top;">RS (ok %)</div>
<div class="r" style="left:330.00px;top:506.00px;width:40.00px;height:24.50px;background:#8c8c8c;"></div>
<div class="r" style="left:330.00px;top:506.00px;width:40.00px;height:24.50px;background:#008000;"></div>
<div class="t" style="left:340.41px;top:512.39px;font-size:11.5px;color:#f4f4f4;">100</div>
<div class="t" style="left:209.80px;top:541.81px;font-size:13.8px;color:#f4f8fc;transform:scaleX(1.0051);transform-origin:left top;">Null Symbol</div>
<div class="r" style="left:330.00px;top:537.00px;width:40.00px;height:24.50px;background:#8c8c8c;"></div>
<div class="r" style="left:330.00px;top:537.00px;width:40.00px;height:24.50px;background:#008000;"></div>
<div class="t" style="left:209.80px;top:572.31px;font-size:13.8px;color:#f4f8fc;transform:scaleX(0.9824);transform-origin:left top;">SymbolTime (ms)</div>
<div class="r" style="left:330.00px;top:567.00px;width:40.00px;height:24.50px;background:#8c8c8c;"></div>
<div class="r" style="left:330.00px;top:567.00px;width:5.20px;height:24.50px;background:#008000;"></div>
<div class="t" style="left:338.81px;top:573.39px;font-size:11.5px;color:#f4f4f4;">0,21</div>
<div class="t" style="left:209.80px;top:602.71px;font-size:13.8px;color:#f4f8fc;transform:scaleX(0.9640);transform-origin:left top;">FrameTime (ms)</div>
<div class="r" style="left:330.00px;top:598.00px;width:40.00px;height:24.50px;background:#8c8c8c;"></div>
<div class="r" style="left:330.00px;top:598.00px;width:25.20px;height:24.50px;background:#008000;"></div>
<div class="t" style="left:338.81px;top:604.39px;font-size:11.5px;color:#f4f4f4;">96,1</div>
<div class="r" style="left:391.7px;top:406.6px;width:61.30000000000001px;height:27px;background:#8a8a8a;border-radius:3px 12px 0 0;box-sizing:border-box;"></div>
<div class="r" style="left:495px;top:406.6px;width:72.5px;height:27px;background:#8a8a8a;border-radius:3px 12px 0 0;box-sizing:border-box;"></div>
<div class="r" style="left:566.5px;top:406.6px;width:58.5px;height:27px;background:#8a8a8a;border-radius:3px 12px 0 0;box-sizing:border-box;"></div>
<div class="r" style="left:624px;top:406.6px;width:86.29999999999995px;height:27px;background:#8a8a8a;border-radius:3px 12px 0 0;box-sizing:border-box;"></div>
<div class="r" style="left:452.3px;top:406.6px;width:43.30000000000001px;height:27px;background:#1b5686;border-radius:3px 12px 0 0;border:1px solid #4a88b8;border-bottom:none;box-sizing:border-box;"></div>
<div class="r" style="left:453.30px;top:432.00px;width:41.30px;height:3.00px;background:#1b5686;"></div>
<div class="t" style="left:404.70px;top:411.97px;font-size:17.6px;color:#e8e8e8;transform:scaleX(0.8715);transform-origin:left top;">Sync</div>
<div class="t" style="left:466.00px;top:411.97px;font-size:17.6px;color:#ffffff;transform:scaleX(0.7793);transform-origin:left top;">TII</div>
<div class="t" style="left:509.70px;top:411.97px;font-size:17.6px;color:#e8e8e8;transform:scaleX(0.9730);transform-origin:left top;">Audio</div>
<div class="t" style="left:579.70px;top:411.97px;font-size:17.6px;color:#e8e8e8;transform:scaleX(0.8870);transform-origin:left top;">AAC</div>
<div class="t" style="left:638.00px;top:411.97px;font-size:17.6px;color:#e8e8e8;transform:scaleX(0.9612);transform-origin:left top;">Options</div>
<div class="r" style="left:418.70px;top:443.20px;width:9.60px;height:9.60px;border-radius:50%;background:#ff0000;"></div>
<div class="r" style="left:448.00px;top:443.75px;width:8.60px;height:9.15px;background:#0d2a48;"></div>
<div class="r" style="left:398.50px;top:463.00px;width:248.50px;height:1.20px;background:#9cc4e4;"></div>
<div class="r" style="left:656.50px;top:433.50px;width:1.00px;height:29.50px;background:#1f5a8e;"></div>
<div class="t" style="left:662.80px;top:453.01px;font-size:13.8px;color:#f4f8fc;transform:scaleX(0.9761);transform-origin:left top;">Threshold</div>
<div class="t" style="left:399.40px;top:481.08px;font-size:15.6px;color:#f4f8fc;transform:scaleX(0.9165);transform-origin:left top;">Pattern</div>
<div class="t" style="left:466.40px;top:481.08px;font-size:15.6px;color:#f4f8fc;transform:scaleX(0.9696);transform-origin:left top;">MainId</div>
<div class="t" style="left:532.00px;top:481.08px;font-size:15.6px;color:#f4f8fc;transform:scaleX(0.9198);transform-origin:left top;">SubId</div>
<div class="t" style="left:590.40px;top:481.08px;font-size:15.6px;color:#f4f8fc;transform:scaleX(0.9530);transform-origin:left top;">Strength</div>
<div class="r" style="left:398.00px;top:499.00px;width:248.50px;height:1.20px;background:#c4d4e4;"></div>
<div class="t" style="left:400.80px;top:513.51px;font-size:13.8px;color:#f4f8fc;transform:scaleX(0.9624);transform-origin:left top;">0x96</div>
<div class="t" style="left:467.80px;top:513.51px;font-size:13.8px;color:#f4f8fc;transform:scaleX(0.8925);transform-origin:left top;">41</div>
<div class="t" style="left:534.60px;top:513.51px;font-size:13.8px;color:#f4f8fc;">1</div>
<div class="t" style="left:591.80px;top:513.51px;font-size:13.8px;color:#f4f8fc;transform:scaleX(0.9382);transform-origin:left top;">0.97</div>
<div class="r" style="left:689.00px;top:484.20px;width:2.40px;height:119.40px;background:#dce8f4;border-radius:1px;"></div>
<div class="r" style="left:683.70px;top:581.30px;width:13.00px;height:13.00px;border-radius:50%;background:radial-gradient(circle at 45% 35%, #e8e8e8 0%, #b8b8b8 45%, #707070 100%);"></div>
<div class="t" style="left:676.20px;top:611.76px;font-size:13.3px;color:#f4f8fc;transform:scaleX(0.9774);transform-origin:left top;">0.10</div>
<div class="t" style="left:1244.70px;top:400.66px;font-size:14.3px;color:#f0f4f8;transform:scaleX(0.9897);transform-origin:left top;">Channel Impulse Response (CIR)</div>
<div class="r" style="left:791.00px;top:431.10px;width:13.00px;height:13.00px;border-radius:50%;background:#e4e4e4;"></div>
<div class="t" style="left:808.20px;top:430.42px;font-size:12.8px;color:#f4f4f4;transform:scaleX(0.8459);transform-origin:left top;">Freeze</div>
<div class="r" style="left:862.40px;top:431.10px;width:13.00px;height:13.00px;border-radius:50%;background:#e4e4e4;"></div>
<div class="t" style="left:879.60px;top:430.42px;font-size:12.8px;color:#f4f4f4;transform:scaleX(0.9227);transform-origin:left top;">Gradient</div>
<div class="t" style="left:796.30px;top:471.43px;font-size:12.9px;color:#f4f4f4;transform:scaleX(0.9168);transform-origin:left top;">Smoothing Level</div>
<div class="r" style="left:796.80px;top:491.20px;width:1.40px;height:3.80px;background:#8a8a8a;"></div>
<div class="r" style="left:809.95px;top:491.20px;width:1.40px;height:3.80px;background:#8a8a8a;"></div>
<div class="r" style="left:823.10px;top:491.20px;width:1.40px;height:3.80px;background:#8a8a8a;"></div>
<div class="r" style="left:836.25px;top:491.20px;width:1.40px;height:3.80px;background:#8a8a8a;"></div>
<div class="r" style="left:849.40px;top:491.20px;width:1.40px;height:3.80px;background:#8a8a8a;"></div>
<div class="r" style="left:862.55px;top:491.20px;width:1.40px;height:3.80px;background:#8a8a8a;"></div>
<div class="r" style="left:875.70px;top:491.20px;width:1.40px;height:3.80px;background:#8a8a8a;"></div>
<div class="r" style="left:888.85px;top:491.20px;width:1.40px;height:3.80px;background:#8a8a8a;"></div>
<div class="r" style="left:902.00px;top:491.20px;width:1.40px;height:3.80px;background:#8a8a8a;"></div>
<div class="r" style="left:915.15px;top:491.20px;width:1.40px;height:3.80px;background:#8a8a8a;"></div>
<div class="r" style="left:928.30px;top:491.20px;width:1.40px;height:3.80px;background:#8a8a8a;"></div>
<div class="r" style="left:791.00px;top:500.90px;width:145.00px;height:2.40px;background:#f0f0f0;border-radius:1.5px;"></div>
<div class="r" style="left:817.50px;top:495.60px;width:13.00px;height:13.00px;border-radius:50%;background:radial-gradient(circle at 45% 35%, #e8e8e8 0%, #b8b8b8 45%, #707070 100%);"></div>
<div class="t" style="left:796.10px;top:525.52px;font-size:12.8px;color:#f4f4f4;transform:scaleX(0.9238);transform-origin:left top;">Zoom X</div>
<div class="r" style="left:791.00px;top:550.90px;width:145.10px;height:2.40px;background:#f0f0f0;border-radius:1.5px;"></div>
<div class="r" style="left:791.40px;top:545.60px;width:13.00px;height:13.00px;border-radius:50%;background:radial-gradient(circle at 45% 35%, #e8e8e8 0%, #b8b8b8 45%, #707070 100%);"></div>
<div class="t" style="left:796.10px;top:575.32px;font-size:12.8px;color:#f4f4f4;transform:scaleX(0.9286);transform-origin:left top;">Zoom Y</div>
<div class="r" style="left:791.00px;top:600.20px;width:145.10px;height:2.40px;background:#f0f0f0;border-radius:1.5px;"></div>
<div class="r" style="left:791.40px;top:594.90px;width:13.00px;height:13.00px;border-radius:50%;background:radial-gradient(circle at 45% 35%, #e8e8e8 0%, #b8b8b8 45%, #707070 100%);"></div>
<div class="t" style="left:796.10px;top:626.22px;font-size:12.8px;color:#f4f4f4;transform:scaleX(0.8983);transform-origin:left top;">x-Axis</div>
<div class="r" style="left:801.90px;top:647.40px;width:11.20px;height:11.20px;border-radius:50%;background:#f8f8f8;"></div>
<div class="t" style="left:820.40px;top:645.72px;font-size:12.8px;color:#f4f4f4;transform:scaleX(0.8735);transform-origin:left top;">Samples</div>
<div class="r" style="left:801.90px;top:667.40px;width:11.20px;height:11.20px;border-radius:50%;background:#f8f8f8;"></div>
<div class="r" style="left:804.90px;top:670.40px;width:5.20px;height:5.20px;border-radius:50%;background:#202020;"></div>
<div class="t" style="left:820.40px;top:665.72px;font-size:12.8px;color:#f4f4f4;transform:scaleX(0.8895);transform-origin:left top;">Distance</div>
<div class="r" style="left:801.90px;top:687.20px;width:11.20px;height:11.20px;border-radius:50%;background:#f8f8f8;"></div>
<div class="t" style="left:820.40px;top:685.42px;font-size:12.8px;color:#f4f4f4;transform:scaleX(0.8938);transform-origin:left top;">Time</div>
<svg class="r" style="left:0;top:0" width="1873" height="840"><rect x="1061.7" y="441" width="142.0999999999999" height="345.20000000000005" fill="#444444"/><line x1="1060.7" y1="441.5" x2="1860.8" y2="441.5" stroke="#606060" stroke-width="1.3"/><line x1="1060.7" y1="510.5" x2="1860.8" y2="510.5" stroke="#606060" stroke-width="1.3"/><line x1="1060.7" y1="579.5" x2="1860.8" y2="579.5" stroke="#606060" stroke-width="1.3"/><line x1="1060.7" y1="648.5" x2="1860.8" y2="648.5" stroke="#606060" stroke-width="1.3"/><line x1="1060.7" y1="717.5" x2="1860.8" y2="717.5" stroke="#606060" stroke-width="1.3"/><line x1="1060.7" y1="786.5" x2="1860.8" y2="786.5" stroke="#606060" stroke-width="1.3"/><line x1="1097.5" y1="441" x2="1097.5" y2="786.2" stroke="#606060" stroke-width="1.3"/><line x1="1150.5" y1="441" x2="1150.5" y2="786.2" stroke="#606060" stroke-width="1.3"/><line x1="1204.5" y1="441" x2="1204.5" y2="786.2" stroke="#606060" stroke-width="1.3"/><line x1="1257.5" y1="441" x2="1257.5" y2="786.2" stroke="#606060" stroke-width="1.3"/><line x1="1311.5" y1="441" x2="1311.5" y2="786.2" stroke="#606060" stroke-width="1.3"/><line x1="1364.5" y1="441" x2="1364.5" y2="786.2" stroke="#606060" stroke-width="1.3"/><line x1="1418.5" y1="441" x2="1418.5" y2="786.2" stroke="#606060" stroke-width="1.3"/><line x1="1471.5" y1="441" x2="1471.5" y2="786.2" stroke="#606060" stroke-width="1.3"/><line x1="1525.5" y1="441" x2="1525.5" y2="786.2" stroke="#606060" stroke-width="1.3"/><line x1="1578.5" y1="441" x2="1578.5" y2="786.2" stroke="#606060" stroke-width="1.3"/><line x1="1632.5" y1="441" x2="1632.5" y2="786.2" stroke="#606060" stroke-width="1.3"/><line x1="1685.5" y1="441" x2="1685.5" y2="786.2" stroke="#606060" stroke-width="1.3"/><line x1="1739.5" y1="441" x2="1739.5" y2="786.2" stroke="#606060" stroke-width="1.3"/><line x1="1792.5" y1="441" x2="1792.5" y2="786.2" stroke="#606060" stroke-width="1.3"/><line x1="1846.5" y1="441" x2="1846.5" y2="786.2" stroke="#606060" stroke-width="1.3"/><line x1="1860.8" y1="441" x2="1860.8" y2="786.2" stroke="#606060" stroke-width="1.3"/><line x1="1060.7" y1="441" x2="1060.7" y2="786.2" stroke="#8a3040" stroke-width="1.4"/><line x1="1204.3" y1="441" x2="1204.3" y2="786.2" stroke="#a8a860" stroke-width="1"/><polyline points="1061.7,692.4 1062.7,651.2 1063.7,651.0 1064.7,656.6 1065.7,672.7 1066.7,652.7 1067.7,653.5 1068.7,655.9 1069.7,672.5 1070.7,660.1 1071.7,673.7 1072.7,644.6 1073.7,647.3 1074.7,638.5 1075.7,657.2 1076.7,653.5 1077.7,638.7 1078.7,648.1 1079.7,659.9 1080.7,657.1 1081.7,666.8 1082.7,662.3 1083.7,648.3 1084.7,671.2 1085.7,666.8 1086.7,647.5 1087.7,662.7 1088.7,637.1 1089.7,682.8 1090.7,693.9 1091.7,673.0 1092.7,659.9 1093.7,648.0 1094.7,677.9 1095.7,642.8 1096.7,675.9 1097.7,641.9 1098.7,670.6 1099.7,725.4 1100.7,662.8 1101.7,709.3 1102.7,665.7 1103.7,703.0 1104.7,654.9 1105.7,666.6 1106.7,672.8 1107.7,645.9 1108.7,683.1 1109.7,689.8 1110.7,674.0 1111.7,691.3 1112.7,659.2 1113.7,649.7 1114.7,673.5 1115.7,664.1 1116.7,645.0 1117.7,651.8 1118.7,666.6 1119.7,668.7 1120.7,655.7 1121.7,666.6 1122.7,711.5 1123.7,663.1 1124.7,650.7 1125.7,688.7 1126.7,664.6 1127.7,702.7 1128.7,674.1 1129.7,725.4 1130.7,689.7 1131.7,672.3 1132.7,643.3 1133.7,658.0 1134.7,659.0 1135.7,679.8 1136.7,683.7 1137.7,677.8 1138.7,645.0 1139.7,661.4 1140.7,648.1 1141.7,655.9 1142.7,648.2 1143.7,655.5 1144.7,645.2 1145.7,654.1 1146.7,649.0 1147.7,668.6 1148.7,659.6 1149.7,668.9 1150.7,688.1 1151.7,641.0 1152.7,662.3 1153.7,649.4 1154.7,653.2 1155.7,653.1 1156.7,671.4 1157.7,654.2 1158.7,662.7 1159.7,690.8 1160.7,646.0 1161.7,646.3 1162.7,669.0 1163.7,689.2 1164.7,650.6 1165.7,657.5 1166.7,629.5 1167.7,643.1 1168.7,661.5 1169.7,666.4 1170.7,644.1 1171.7,648.6 1172.7,674.4 1173.7,675.2 1174.7,699.9 1175.7,665.0 1176.7,695.9 1177.7,658.9 1178.7,656.1 1179.7,651.4 1180.7,655.2 1181.7,692.2 1182.7,661.1 1183.7,648.3 1184.7,626.7 1185.7,637.3 1186.7,664.4 1187.7,641.2 1188.7,654.3 1189.7,651.8 1190.7,646.0 1191.7,661.0 1192.7,652.0 1193.7,652.8 1194.7,698.6 1195.7,657.3 1196.7,642.2 1197.7,642.1 1198.7,644.5 1199.7,664.2 1200.7,697.8 1201.7,647.2 1202.7,664.9 1203.7,658.4 1204.7,665.4 1205.7,661.1 1206.7,528.7 1206.8,528.7 1207.7,566.9 1208.7,582.7 1209.7,609.3 1210.7,632.4 1211.7,638.3 1212.7,636.4 1213.7,624.3 1214.7,631.3 1215.7,656.4 1216.7,628.8 1217.7,653.1 1218.7,654.8 1219.7,648.6 1220.7,661.4 1221.7,659.4 1222.7,656.9 1223.7,655.8 1224.7,651.1 1225.7,655.9 1226.7,636.6 1227.7,659.1 1228.7,649.7 1229.7,653.2 1230.7,645.9 1231.7,646.0 1232.7,662.5 1233.7,643.1 1234.7,635.2 1235.7,626.7 1236.7,627.3 1237.7,624.2 1238.7,637.3 1239.7,663.9 1240.7,639.6 1241.7,641.9 1242.7,634.6 1243.7,644.1 1244.7,637.3 1245.7,627.1 1246.7,619.8 1247.7,604.3 1248.7,599.8 1249.7,590.6 1250.7,593.9 1251.7,579.5 1252.7,564.7 1253.7,546.2 1254.7,534.4 1255.7,517.9 1256.7,491.6 1257.7,474.5 1258.2,447.8 1258.7,468.0 1259.7,499.0 1260.7,506.9 1261.7,532.3 1262.7,545.8 1263.7,571.0 1264.7,576.2 1265.7,577.2 1266.7,590.6 1267.7,601.2 1268.7,602.1 1269.7,600.8 1270.7,624.0 1271.7,623.2 1272.7,628.4 1273.7,612.1 1274.7,633.4 1275.7,634.0 1276.7,630.1 1277.7,636.2 1278.7,630.0 1279.7,633.5 1280.7,648.1 1281.7,628.4 1282.7,651.8 1283.7,626.9 1284.7,634.4 1285.7,643.5 1286.7,636.7 1287.7,634.2 1288.7,637.2 1289.7,649.1 1290.7,646.3 1291.7,645.3 1292.7,635.9 1293.7,646.3 1294.7,641.9 1295.7,635.0 1296.7,691.1 1297.7,653.9 1298.7,672.1 1299.7,643.5 1300.7,635.3 1301.7,662.4 1302.7,661.8 1303.7,660.9 1304.7,645.7 1305.7,673.4 1306.7,691.0 1307.7,690.3 1308.7,664.1 1309.7,651.3 1310.7,684.4 1311.7,665.0 1312.7,696.7 1313.7,649.2 1314.7,637.7 1315.7,646.3 1316.7,658.7 1317.7,681.5 1318.7,721.2 1319.7,660.3 1320.7,639.6 1321.7,667.2 1322.7,700.0 1323.7,655.2 1324.7,642.3 1325.7,665.6 1326.7,695.1 1327.7,667.5 1328.7,663.8 1329.7,670.2 1330.7,689.5 1331.7,664.8 1332.7,647.6 1333.7,656.6 1334.7,666.6 1335.7,670.9 1336.7,675.7 1337.7,709.2 1338.7,681.0 1339.7,651.1 1340.7,665.8 1341.7,638.1 1342.7,640.6 1343.7,664.9 1344.7,645.5 1345.7,660.9 1346.7,675.8 1347.7,708.1 1348.7,644.4 1349.7,634.9 1350.7,649.6 1351.7,647.8 1352.7,695.4 1353.7,662.3 1354.7,669.7 1355.7,723.4 1356.7,656.7 1357.7,659.4 1358.7,674.1 1359.7,655.4 1360.7,648.1 1361.7,676.3 1362.7,703.3 1363.7,684.9 1364.7,709.4 1365.7,658.4 1366.7,651.8 1367.7,674.9 1368.7,651.0 1369.7,698.9 1370.7,653.8 1371.7,659.0 1372.7,666.2 1373.7,683.8 1374.7,643.3 1375.7,665.6 1376.7,658.3 1377.7,652.4 1378.7,665.3 1379.7,660.6 1380.7,666.6 1381.7,643.4 1382.7,661.7 1383.7,649.8 1384.7,651.7 1385.7,660.4 1386.7,675.8 1387.7,645.6 1388.7,643.2 1389.7,670.0 1390.7,643.3 1391.7,654.8 1392.7,672.1 1393.7,676.7 1394.7,659.0 1395.7,647.7 1396.7,660.1 1397.7,643.3 1398.7,670.9 1399.7,648.9 1400.7,707.6 1401.7,660.2 1402.7,670.5 1403.7,649.9 1404.7,633.5 1405.7,668.4 1406.7,659.2 1407.7,663.6 1408.7,664.1 1409.7,650.6 1410.7,687.4 1411.7,643.4 1412.7,667.0 1413.7,667.7 1414.7,642.7 1415.7,639.6 1416.7,645.9 1417.7,634.9 1418.7,650.9 1419.7,650.3 1420.7,658.4 1421.7,680.9 1422.7,652.6 1423.7,655.7 1424.7,648.2 1425.7,648.0 1426.7,670.2 1427.7,650.1 1428.7,671.1 1429.7,633.7 1430.7,666.8 1431.7,689.4 1432.7,660.6 1433.7,663.6 1434.7,668.0 1435.7,641.6 1436.7,656.5 1437.7,663.9 1438.7,691.2 1439.7,673.1 1440.7,650.8 1441.7,630.5 1442.7,656.7 1443.7,670.5 1444.7,670.1 1445.7,655.6 1446.7,685.2 1447.7,691.5 1448.7,653.0 1449.7,654.0 1450.7,711.2 1451.7,669.3 1452.7,678.9 1453.7,646.7 1454.7,669.4 1455.7,657.7 1456.7,637.3 1457.7,638.7 1458.7,669.0 1459.7,646.0 1460.7,690.7 1461.7,720.0 1462.7,678.1 1463.7,658.6 1464.7,709.6 1465.7,645.2 1466.7,647.3 1467.7,642.6 1468.7,656.3 1469.7,647.3 1470.7,653.8 1471.7,671.4 1472.7,666.3 1473.7,641.2 1474.7,637.9 1475.7,636.2 1476.7,646.7 1477.7,655.2 1478.7,649.0 1479.7,660.5 1480.7,640.7 1481.7,672.1 1482.7,658.0 1483.7,665.5 1484.7,654.6 1485.7,637.3 1486.7,690.4 1487.7,650.8 1488.7,641.4 1489.7,627.5 1490.7,639.5 1491.7,699.9 1492.7,672.4 1493.7,658.2 1494.7,697.3 1495.7,655.7 1496.7,664.6 1497.7,651.6 1498.7,649.5 1499.7,638.4 1500.7,660.2 1501.7,674.0 1502.7,636.0 1503.7,629.7 1504.7,640.4 1505.7,671.4 1506.7,666.2 1507.7,673.6 1508.7,687.6 1509.7,634.7 1510.7,701.4 1511.7,649.9 1512.7,659.0 1513.7,662.4 1514.7,639.4 1515.7,708.8 1516.7,688.0 1517.7,656.3 1518.7,645.9 1519.7,661.8 1520.7,674.4 1521.7,665.5 1522.7,659.3 1523.7,666.1 1524.7,672.2 1525.7,667.1 1526.7,647.1 1527.7,672.4 1528.7,670.1 1529.7,645.1 1530.7,641.6 1531.7,636.5 1532.7,665.9 1533.7,687.3 1534.7,685.1 1535.7,680.3 1536.7,659.5 1537.7,646.2 1538.7,668.5 1539.7,682.5 1540.7,658.1 1541.7,684.2 1542.7,679.7 1543.7,688.4 1544.7,661.4 1545.7,682.1 1546.7,652.0 1547.7,687.2 1548.7,663.9 1549.7,648.0 1550.7,695.6 1551.7,656.1 1552.7,655.5 1553.7,648.3 1554.7,676.8 1555.7,669.3 1556.7,687.9 1557.7,660.5 1558.7,671.4 1559.7,654.4 1560.7,697.0 1561.7,668.1 1562.7,697.3 1563.7,652.3 1564.7,646.5 1565.7,678.0 1566.7,660.8 1567.7,651.5 1568.7,655.2 1569.7,685.9 1570.7,653.6 1571.7,662.5 1572.7,663.1 1573.7,637.5 1574.7,651.1 1575.7,644.6 1576.7,661.7 1577.7,666.5 1578.7,662.3 1579.7,650.3 1580.7,671.9 1581.7,660.7 1582.7,641.7 1583.7,641.9 1584.7,666.7 1585.7,648.2 1586.7,669.0 1587.7,713.2 1588.7,682.1 1589.7,666.1 1590.7,638.0 1591.7,643.1 1592.7,652.8 1593.7,662.8 1594.7,642.6 1595.7,667.9 1596.7,661.8 1597.7,631.9 1598.7,655.2 1599.7,669.0 1600.7,673.7 1601.7,642.7 1602.7,650.3 1603.7,664.7 1604.7,663.9 1605.7,683.2 1606.7,646.6 1607.7,694.5 1608.7,647.1 1609.7,675.3 1610.7,667.3 1611.7,667.0 1612.7,676.9 1613.7,688.1 1614.7,668.4 1615.7,621.5 1616.7,658.7 1617.7,662.2 1618.7,645.8 1619.7,655.0 1620.7,664.6 1621.7,654.9 1622.7,644.9 1623.7,664.1 1624.7,644.4 1625.7,662.9 1626.7,661.1 1627.7,644.0 1628.7,652.1 1629.7,664.4 1630.7,654.5 1631.7,643.2 1632.7,655.4 1633.7,675.1 1634.7,654.5 1635.7,639.8 1636.7,649.0 1637.7,651.3 1638.7,644.2 1639.7,651.6 1640.7,650.9 1641.7,669.4 1642.7,674.5 1643.7,642.2 1644.7,685.3 1645.7,660.4 1646.7,698.2 1647.7,686.6 1648.7,694.2 1649.7,684.1 1650.7,691.9 1651.7,678.0 1652.7,646.1 1653.7,660.3 1654.7,704.3 1655.7,689.4 1656.7,635.0 1657.7,662.1 1658.7,692.8 1659.7,657.9 1660.7,659.4 1661.7,643.2 1662.7,672.7 1663.7,636.5 1664.7,647.0 1665.7,659.4 1666.7,643.0 1667.7,719.8 1668.7,646.5 1669.7,675.5 1670.7,654.5 1671.7,652.1 1672.7,660.4 1673.7,688.9 1674.7,674.1 1675.7,676.7 1676.7,677.4 1677.7,645.1 1678.7,660.8 1679.7,671.5 1680.7,682.3 1681.7,653.4 1682.7,657.0 1683.7,683.1 1684.7,682.4 1685.7,720.1 1686.7,665.1 1687.7,659.1 1688.7,664.5 1689.7,660.6 1690.7,641.1 1691.7,687.8 1692.7,657.0 1693.7,642.9 1694.7,647.8 1695.7,650.2 1696.7,680.7 1697.7,656.7 1698.7,682.7 1699.7,649.9 1700.7,668.1 1701.7,664.1 1702.7,649.0 1703.7,678.3 1704.7,666.4 1705.7,656.2 1706.7,655.7 1707.7,652.2 1708.7,664.8 1709.7,658.0 1710.7,664.8 1711.7,642.3 1712.7,654.2 1713.7,642.4 1714.7,662.1 1715.7,654.1 1716.7,672.1 1717.7,661.5 1718.7,674.3 1719.7,641.8 1720.7,716.6 1721.7,644.7 1722.7,674.3 1723.7,652.4 1724.7,662.2 1725.7,665.7 1726.7,662.6 1727.7,629.2 1728.7,667.2 1729.7,655.7 1730.7,676.4 1731.7,641.1 1732.7,658.4 1733.7,669.7 1734.7,653.6 1735.7,676.1 1736.7,663.1 1737.7,657.2 1738.7,664.7 1739.7,650.8 1740.7,655.3 1741.7,648.9 1742.7,663.5 1743.7,679.5 1744.7,636.2 1745.7,653.2 1746.7,679.4 1747.7,667.6 1748.7,660.0 1749.7,642.1 1750.7,658.3 1751.7,652.2 1752.7,677.2 1753.7,697.1 1754.7,645.2 1755.7,654.0 1756.7,661.8 1757.7,690.1 1758.7,648.1 1759.7,655.4 1760.7,681.4 1761.7,659.9 1762.7,629.5 1763.7,679.4 1764.7,693.9 1765.7,651.6 1766.7,683.3 1767.7,668.3 1768.7,643.7 1769.7,693.5 1770.7,662.7 1771.7,641.8 1772.7,667.7 1773.7,646.9 1774.7,630.6 1775.7,654.7 1776.7,653.4 1777.7,677.3 1778.7,659.0 1779.7,632.6 1780.7,663.6 1781.7,649.3 1782.7,657.4 1783.7,665.3 1784.7,677.4 1785.7,651.7 1786.7,669.5 1787.7,723.4 1788.7,676.4 1789.7,664.7 1790.7,656.9 1791.7,672.0 1792.7,671.3 1793.7,707.2 1794.7,662.5 1795.7,668.1 1796.7,667.1 1797.7,677.0 1798.7,650.1 1799.7,663.8 1800.7,667.5 1801.7,663.8 1802.7,646.6 1803.7,721.8 1804.7,645.4 1805.7,691.6 1806.7,651.7 1807.7,644.7 1808.7,644.3 1809.7,666.4 1810.7,669.8 1811.7,647.6 1812.7,654.6 1813.7,653.4 1814.7,661.9 1815.7,667.0 1816.7,652.9 1817.7,715.5 1818.7,670.1 1819.7,656.3 1820.7,643.4 1821.7,652.6 1822.7,655.5 1823.7,677.0 1824.7,680.1 1825.7,652.1 1826.7,637.0 1827.7,642.9 1828.7,672.6 1829.7,660.6 1830.7,667.4 1831.4,570.8 1831.7,570.8 1832.7,673.7 1833.7,646.1 1834.7,653.5 1835.7,662.1 1836.7,645.5 1837.7,695.5 1838.7,648.8 1839.7,648.6 1840.7,654.7 1841.7,638.5 1842.7,695.8 1843.7,671.3 1844.7,634.2 1845.7,675.7 1846.7,641.1 1847.7,696.2 1848.7,696.5 1849.7,691.6 1850.7,669.6 1851.7,649.8 1852.7,673.5 1853.7,654.0 1854.7,682.9 1855.7,644.1 1856.7,661.4 1857.7,666.8 1858.7,648.9 1859.7,659.9 1860.7,651.3" fill="none" stroke="#d8d8d8" stroke-width="1" stroke-linejoin="round"/></svg>
<div class="r" style="left:1254.10px;top:440.70px;width:8.40px;height:8.40px;border-radius:50%;background:#ffee00;"></div>
<div class="r" style="left:1202.60px;top:523.40px;width:8.40px;height:8.40px;border-radius:50%;background:#ff0000;"></div>
<div class="t" style="left:1016.84px;top:434.41px;font-size:13.8px;color:#ffffff;transform:scaleX(0.9659);transform-origin:right top;">-10.0</div>
<div class="t" style="left:1016.84px;top:503.45px;font-size:13.8px;color:#ffffff;transform:scaleX(0.9659);transform-origin:right top;">-20.0</div>
<div class="t" style="left:1016.84px;top:572.49px;font-size:13.8px;color:#ffffff;transform:scaleX(0.9659);transform-origin:right top;">-30.0</div>
<div class="t" style="left:1016.84px;top:641.53px;font-size:13.8px;color:#ffffff;transform:scaleX(0.9659);transform-origin:right top;">-40.0</div>
<div class="t" style="left:1016.84px;top:710.57px;font-size:13.8px;color:#ffffff;transform:scaleX(0.9659);transform-origin:right top;">-50.0</div>
<div class="t" style="left:1016.84px;top:779.61px;font-size:13.8px;color:#ffffff;transform:scaleX(0.9659);transform-origin:right top;">-60.0</div>
<div class="t" style="left:1086.83px;top:791.51px;font-size:13.8px;color:#ffffff;transform:scaleX(0.9659);transform-origin:center top;">-60</div>
<div class="t" style="left:1140.33px;top:791.51px;font-size:13.8px;color:#ffffff;transform:scaleX(0.9659);transform-origin:center top;">-40</div>
<div class="t" style="left:1193.83px;top:791.51px;font-size:13.8px;color:#ffffff;transform:scaleX(0.9659);transform-origin:center top;">-20</div>
<div class="t" style="left:1253.46px;top:791.51px;font-size:13.8px;color:#ffffff;transform:scaleX(0.9659);transform-origin:center top;">0</div>
<div class="t" style="left:1303.12px;top:791.51px;font-size:13.8px;color:#ffffff;transform:scaleX(0.9659);transform-origin:center top;">20</div>
<div class="t" style="left:1356.62px;top:791.51px;font-size:13.8px;color:#ffffff;transform:scaleX(0.9659);transform-origin:center top;">40</div>
<div class="t" style="left:1410.12px;top:791.51px;font-size:13.8px;color:#ffffff;transform:scaleX(0.9659);transform-origin:center top;">60</div>
<div class="t" style="left:1463.62px;top:791.51px;font-size:13.8px;color:#ffffff;transform:scaleX(0.9659);transform-origin:center top;">80</div>
<div class="t" style="left:1513.29px;top:791.51px;font-size:13.8px;color:#ffffff;transform:scaleX(0.9659);transform-origin:center top;">100</div>
<div class="t" style="left:1566.79px;top:791.51px;font-size:13.8px;color:#ffffff;transform:scaleX(0.9659);transform-origin:center top;">120</div>
<div class="t" style="left:1620.29px;top:791.51px;font-size:13.8px;color:#ffffff;transform:scaleX(0.9659);transform-origin:center top;">140</div>
<div class="t" style="left:1673.79px;top:791.51px;font-size:13.8px;color:#ffffff;transform:scaleX(0.9659);transform-origin:center top;">160</div>
<div class="t" style="left:1727.29px;top:791.51px;font-size:13.8px;color:#ffffff;transform:scaleX(0.9659);transform-origin:center top;">180</div>
<div class="t" style="left:1780.79px;top:791.51px;font-size:13.8px;color:#ffffff;transform:scaleX(0.9659);transform-origin:center top;">200</div>
<div class="t" style="left:1834.29px;top:791.51px;font-size:13.8px;color:#ffffff;transform:scaleX(0.9659);transform-origin:center top;">220</div>
<div class="t" style="left:1384.95px;top:812.31px;font-size:13.8px;color:#ffffff;transform:scaleX(0.9659);transform-origin:center top;">Distance Difference (km)</div>
<div class="t" style="left:983.71px;top:659.1px;font-size:13.8px;color:#fff;transform:rotate(-90deg) scaleX(0.9659);transform-origin:left top;">Magnitude (dB)</div>
</body></html>
